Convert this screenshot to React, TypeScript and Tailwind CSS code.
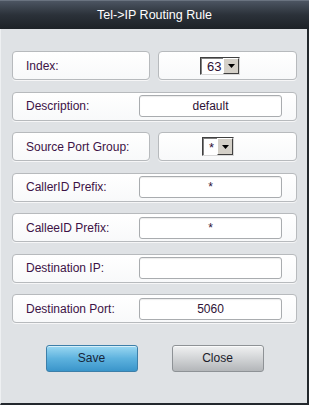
import React from "react";

const font = { fontFamily: '"Liberation Sans", Arial, sans-serif' };

function Box({ children, className = "" }: { children?: React.ReactNode; className?: string }) {
  return (
    <div
      className={
        "h-[29px] flex items-center rounded-[4px] border border-[#b7babd] bg-gradient-to-b from-white to-[#f8f9fa] shadow-[0_1px_0_rgba(255,255,255,0.7)] " +
        className
      }
    >
      {children}
    </div>
  );
}

function Label({ children }: { children: React.ReactNode }) {
  return <span className="pl-[13px] text-[12px] text-[#3d1346] leading-none">{children}</span>;
}

function TextInput({ value }: { value: string }) {
  return (
    <div className="ml-auto mr-[14px] w-[143px] h-[22px] rounded-[3px] border border-[#a9acaf] bg-white shadow-[inset_0_1px_1px_rgba(0,0,0,0.08)] flex items-center justify-center text-[12px] text-[#2e1236]">
      {value}
    </div>
  );
}

function Select({ value, w, h, pad }: { value: string; w: string; h: string; pad: string }) {
  return (
    <div className={"flex border border-t-[#404040] border-l-[#404040] border-r-[#d8d8d8] border-b-[#d8d8d8] bg-white " + w + " " + h}>
      <div className={"flex-1 flex items-center text-[13px] text-[#2e1236] leading-none border-t border-l border-[#808080] " + pad}>
        {value}
      </div>
      <div className="w-[16px] h-full bg-[#d4d0c8] border border-t-white border-l-white border-r-[#404040] border-b-[#404040] flex items-center justify-center">
        <svg width="7" height="4" viewBox="0 0 7 4">
          <polygon points="0,0 7,0 3.5,4" fill="#000" />
        </svg>
      </div>
    </div>
  );
}

export default function App() {
  return (
    <div className="w-[309px] h-[405px] flex flex-col" style={font}>
      <div className="h-[29px] shrink-0 bg-gradient-to-b from-[#4c5562] via-[#2b3139] to-[#1d2227] border-t border-[#6a7380] flex items-center justify-center text-white text-[12.5px]">
        Tel-&gt;IP Routing Rule
      </div>
      <div className="flex-1 bg-[#dfe2e5] border-r-2 border-b-2 border-[#23282d] border-l border-l-[#eef0f2] pt-[22px] pl-[11px] pr-[10px] flex flex-col gap-[11.5px]">
        <div className="flex gap-[8px]">
          <Box className="w-[138px]">
            <Label>Index:</Label>
          </Box>
          <Box className="flex-1 pl-[41px]">
            <Select value="63" w="w-[40px]" h="h-[18px]" pad="pl-[5px]" />
          </Box>
        </div>
        <Box>
          <Label>Description:</Label>
          <TextInput value="default" />
        </Box>
        <div className="flex gap-[8px]">
          <Box className="w-[138px]">
            <Label>Source Port Group:</Label>
          </Box>
          <Box className="flex-1 pl-[43px]">
            <Select value="*" w="w-[32px]" h="h-[19px]" pad="pl-[5px]" />
          </Box>
        </div>
        <Box>
          <Label>CallerID Prefix:</Label>
          <TextInput value="*" />
        </Box>
        <Box>
          <Label>CalleeID Prefix:</Label>
          <TextInput value="*" />
        </Box>
        <Box>
          <Label>Destination IP:</Label>
          <TextInput value="" />
        </Box>
        <Box>
          <Label>Destination Port:</Label>
          <TextInput value="5060" />
        </Box>
        <div className="flex justify-center gap-[34px] mt-[10px]">
          <button className="w-[92px] h-[27px] rounded-[3px] border border-[#3d7fa9] bg-gradient-to-b from-[#9ad8f2] via-[#5db2de] to-[#3a95ca] text-[12px] text-[#17263a] shadow-[inset_0_1px_0_rgba(255,255,255,0.6)]">
            Save
          </button>
          <button className="w-[92px] h-[27px] rounded-[3px] border border-[#8e9296] bg-gradient-to-b from-[#f0f1f2] via-[#d2d4d6] to-[#b3b6b9] text-[12px] text-[#1b1b2a] shadow-[inset_0_1px_0_rgba(255,255,255,0.7)]">
            Close
          </button>
        </div>
      </div>
    </div>
  );
}
